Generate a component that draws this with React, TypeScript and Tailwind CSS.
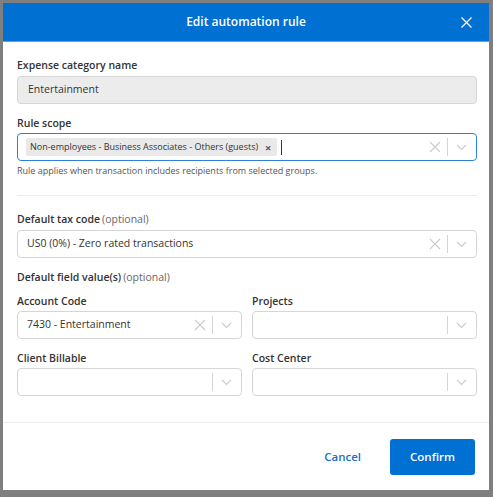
import React from 'react';

const font = { fontFamily: '"Open Sans", "Noto Sans", sans-serif' };

function ClearIcon() {
  return (
    <svg width="12" height="12" viewBox="0 0 12 12" className="text-[#cbcbcb]">
      <path d="M1 1L11 11M11 1L1 11" stroke="currentColor" strokeWidth="1.1" fill="none" />
    </svg>
  );
}

function Chevron() {
  return (
    <svg width="11" height="7" viewBox="0 0 11 7" className="text-[#cbcbcb]">
      <path d="M1 1L5.5 5.5L10 1" stroke="currentColor" strokeWidth="1.1" fill="none" />
    </svg>
  );
}

function Indicators({ clear }: { clear?: boolean }) {
  return (
    <div className="flex items-center h-full">
      {clear && (
        <div className="px-[6px] flex items-center">
          <ClearIcon />
        </div>
      )}
      <div className="w-px h-[18px] bg-[#d4d4d4]" />
      <div className="pl-[8px] pr-[9px] flex items-center">
        <Chevron />
      </div>
    </div>
  );
}

function Select({ value, clear }: { value?: string; clear?: boolean }) {
  return (
    <div className="flex h-[28px] items-center rounded-[4px] border border-[#d6d6d6] bg-white">
      <div className="flex-1 pl-[9px] text-[10.5px] text-[#333] truncate">{value}</div>
      <Indicators clear={clear} />
    </div>
  );
}

function Label({ children, optional }: { children: React.ReactNode; optional?: boolean }) {
  return (
    <div className="text-[10.5px] leading-[15px] font-semibold text-[#333]">
      {children}
      {optional && <span className="ml-[2px] font-normal text-[#666]">(optional)</span>}
    </div>
  );
}

export default function App() {
  return (
    <div className="w-[493px] h-[497px] bg-[#7f7f7f] pt-[3px] pl-[3px] pr-[4px] pb-[7px]" style={font}>
      <div className="flex h-full flex-col bg-white">
        <div className="relative flex h-[39px] items-center justify-center bg-[#0070d2] border-b border-[#5aa2e6]">
          <span className="text-[12px] font-semibold text-white">Edit automation rule</span>
          <svg
            width="11"
            height="11"
            viewBox="0 0 11 11"
            className="absolute right-[17px] top-[14px] text-white"
          >
            <path d="M0.5 0.5L10.5 10.5M10.5 0.5L0.5 10.5" stroke="currentColor" strokeWidth="1.2" fill="none" />
          </svg>
        </div>

        <div className="flex-1 pl-[14px] pr-[12px] pt-[16px]">
          <Label>Expense category name</Label>
          <div className="mt-[3px] flex h-[28px] items-center rounded-[4px] border border-[#d6d6d6] bg-[#ececed] pl-[10px] text-[10.5px] text-[#333]">
            Entertainment
          </div>

          <div className="mt-[12px]">
            <Label>Rule scope</Label>
          </div>
          <div className="mt-[2px] flex h-[28px] items-center rounded-[4px] border border-[#2f80db] bg-white">
            <div className="flex flex-1 items-center pl-[8px]">
              <div className="flex h-[18px] items-center rounded-[2px] bg-[#e9e9e9] pl-[4px] pr-[6px] text-[9px] text-[#333]">
                Non-employees - Business Associates - Others (guests)
                <span className="ml-[7px] text-[11px] font-bold leading-none text-[#555]">×</span>
              </div>
              <div className="ml-[4px] h-[15px] w-px bg-[#333]" />
            </div>
            <Indicators clear />
          </div>
          <div className="mt-[3px] text-[9px] leading-[13px] text-[#555]">
            Rule applies when transaction includes recipients from selected groups.
          </div>

          <div className="mt-[18px] h-px bg-[#ececec]" />

          <div className="mt-[16px]">
            <Label optional>Default tax code</Label>
          </div>
          <div className="mt-[3px]">
            <Select value="US0 (0%) - Zero rated transactions" clear />
          </div>

          <div className="mt-[12px]">
            <Label optional>Default field value(s)</Label>
          </div>

          <div className="mt-[9px] grid grid-cols-2 gap-x-[10px]">
            <div>
              <Label>Account Code</Label>
              <div className="mt-[2px]">
                <Select value="7430 - Entertainment" clear />
              </div>
            </div>
            <div>
              <Label>Projects</Label>
              <div className="mt-[2px]">
                <Select />
              </div>
            </div>
            <div className="mt-[12px]">
              <Label>Client Billable</Label>
              <div className="mt-[2px]">
                <Select />
              </div>
            </div>
            <div className="mt-[12px]">
              <Label>Cost Center</Label>
              <div className="mt-[2px]">
                <Select />
              </div>
            </div>
          </div>
        </div>

        <div className="flex h-[68px] items-center justify-end border-t border-[#ececec] pr-[14px]">
          <button className="mr-[29px] text-[11.5px] font-semibold text-[#1a6fc9]">Cancel</button>
          <button className="h-[36px] w-[85px] rounded-[3px] bg-[#0070d2] text-[11.5px] font-semibold text-white">
            Confirm
          </button>
        </div>
      </div>
    </div>
  );
}
